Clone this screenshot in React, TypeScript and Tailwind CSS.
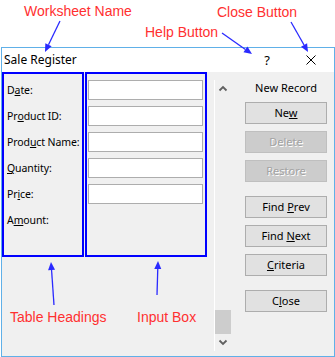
import React from 'react';

const labels: { pre: string; key: string; post: string }[] = [
  { pre: 'D', key: 'a', post: 'te:' },
  { pre: 'Pr', key: 'o', post: 'duct ID:' },
  { pre: 'Prod', key: 'u', post: 'ct Name:' },
  { pre: '', key: 'Q', post: 'uantity:' },
  { pre: 'Pr', key: 'i', post: 'ce:' },
  { pre: 'A', key: 'm', post: 'ount:' },
];

type Btn = { pre: string; key?: string; post?: string; disabled?: boolean; gap?: boolean };

const buttons: Btn[] = [
  { pre: 'Ne', key: 'w' },
  { pre: 'Delete', disabled: true },
  { pre: 'Restore', disabled: true },
  { pre: 'Find ', key: 'P', post: 'rev', gap: true },
  { pre: 'Find ', key: 'N', post: 'ext' },
  { pre: '', key: 'C', post: 'riteria' },
  { pre: 'C', key: 'l', post: 'ose', gap: true },
];

const arrows: [number, number, number, number][] = [
  [60, 21, 45, 52],
  [222, 33, 252, 54],
  [291, 22, 308, 52],
  [54, 305, 51, 262],
  [157, 295, 158, 261],
];

function Arrow({ x1, y1, x2, y2 }: { x1: number; y1: number; x2: number; y2: number }) {
  const a = Math.atan2(y2 - y1, x2 - x1);
  const len = 8;
  const w = 3.5;
  const bx = x2 - len * Math.cos(a);
  const by = y2 - len * Math.sin(a);
  const px = -Math.sin(a) * w;
  const py = Math.cos(a) * w;
  return (
    <g>
      <line x1={x1} y1={y1} x2={bx} y2={by} stroke="#2a2aff" strokeWidth={1.3} />
      <polygon points={`${x2},${y2} ${bx + px},${by + py} ${bx - px},${by - py}`} fill="#2a2aff" />
    </g>
  );
}

function Chevron({ up }: { up?: boolean }) {
  return (
    <svg width="10" height="7" viewBox="0 0 10 7">
      <path d={up ? 'M1.5 5.5 L5 2 L8.5 5.5' : 'M1.5 1.5 L5 5 L8.5 1.5'} fill="none" stroke="#606060" strokeWidth="1.8" />
    </svg>
  );
}

export default function App() {
  return (
    <div className="relative w-[335px] h-[357px] bg-white overflow-hidden font-['Noto_Sans',sans-serif] text-[11px] text-black">
      <div className="pt-[47px]">
        <div className="ml-[1px] w-[334px] h-[310px] border border-[#60b0e8] flex flex-col">
          <div className="h-[24px] bg-white flex items-center pl-[2px] text-[12px]">
            <span>Sale Register</span>
            <div className="flex-1" />
            <span className="w-[12px] text-center text-[13px] leading-none">?</span>
            <svg className="ml-[33px] mr-[18px]" width="10" height="10" viewBox="0 0 10 10">
              <path d="M0.5 0.5 L9.5 9.5 M9.5 0.5 L0.5 9.5" stroke="#000" strokeWidth="1" />
            </svg>
          </div>

          <div className="flex-1 bg-[#f0f0f0] flex items-start">
            <div className="w-[82px] h-[185px] border-2 border-[#0000ff] pt-[6px] pl-[3px] flex flex-col gap-[6px] text-[10.5px]">
              {labels.map((l) => (
                <div key={l.post} className="h-[20px] flex items-center leading-[14px] whitespace-nowrap tracking-[-0.1px]">
                  {l.pre}
                  <u className="underline-offset-[1px]">{l.key}</u>
                  {l.post}
                </div>
              ))}
            </div>

            <div className="ml-[1px] w-[122px] h-[185px] border-2 border-[#0000ff] pt-[6px] pl-[1px] flex flex-col gap-[6px]">
              {[0, 1, 2, 3, 4].map((i) => (
                <div key={i} className="w-[115px] h-[20px] border border-[#adadad] bg-white" />
              ))}
            </div>

            <div className="ml-[7px] mt-[8px] w-[17px] h-[271px] border-l border-white flex flex-col">
              <div className="h-[17px] flex items-center justify-center">
                <Chevron up />
              </div>
              <div className="flex-1" />
              <div className="h-[24px] bg-[#cdcdcd]" />
              <div className="h-[17px] flex items-center justify-center">
                <Chevron />
              </div>
            </div>

            <div className="ml-[14px] w-[82px] flex flex-col">
              <div className="pt-[9px] leading-[14px] text-center">New Record</div>
              {buttons.map((b) => (
                <div
                  key={b.pre + (b.post ?? '')}
                  className={
                    'h-[22px] border flex items-center justify-center leading-[14px] ' +
                    (b.gap ? 'mt-[14px] ' : 'mt-[7px] ') +
                    (b.disabled
                      ? 'bg-[#cccccc] border-[#bfbfbf] text-[#a3a3a3] [text-shadow:1px_1px_0_#ffffff]'
                      : 'bg-[#e1e1e1] border-[#adadad]')
                  }
                >
                  <span className="whitespace-pre">
                    {b.pre}
                    {b.key && <u className="underline-offset-[1px]">{b.key}</u>}
                    {b.post}
                  </span>
                </div>
              ))}
            </div>
          </div>
        </div>
      </div>

      <div className="absolute inset-0 pointer-events-none font-['Liberation_Sans',sans-serif] text-[14px] leading-[14px] text-[#ff3030]">
        <span className="absolute left-[24px] top-[4px]">Worksheet Name</span>
        <span className="absolute left-[145px] top-[25px]">Help Button</span>
        <span className="absolute left-[217px] top-[5px]">Close Button</span>
        <span className="absolute left-[10px] top-[310px]">Table Headings</span>
        <span className="absolute left-[137px] top-[310px]">Input Box</span>
        <svg className="absolute inset-0" width="335" height="357" viewBox="0 0 335 357">
          {arrows.map(([x1, y1, x2, y2], i) => (
            <Arrow key={i} x1={x1} y1={y1} x2={x2} y2={y2} />
          ))}
        </svg>
      </div>
    </div>
  );
}
